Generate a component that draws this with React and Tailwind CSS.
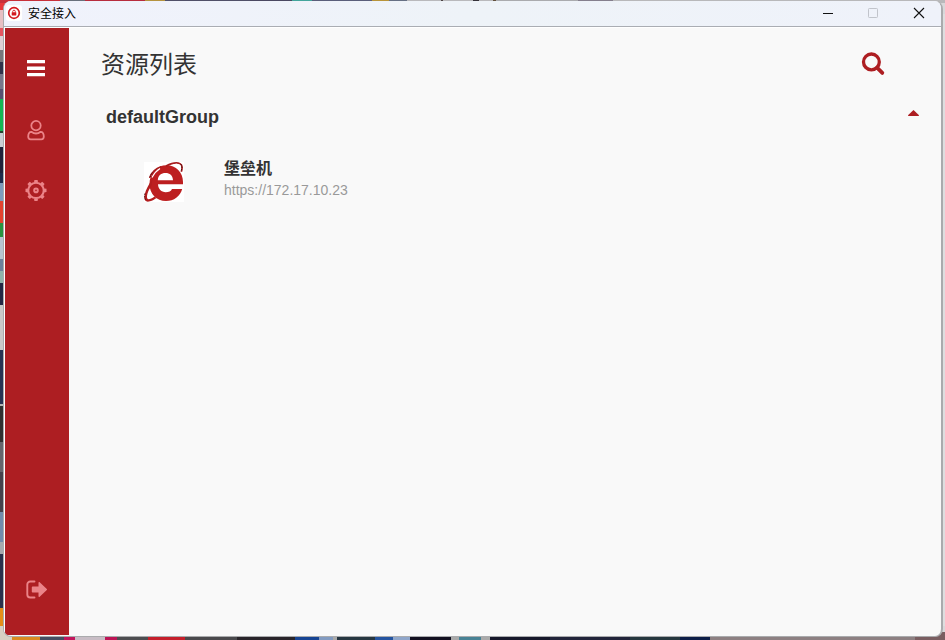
const leftEdge = [
  [10, '#e8383b'], [18, '#e7bfc3'], [8, '#e45660'], [14, '#dccfd4'], [12, '#77777c'],
  [12, '#30334a'], [15, '#77778a'], [10, '#565270'], [32, '#13b653'], [2, '#24452f'],
  [14, '#c9ced3'], [26, '#20223a'], [10, '#1e2c4c'], [18, '#7d9bbc'], [22, '#e4432f'],
  [14, '#29933f'], [22, '#b7c4d0'], [12, '#6d819c'], [12, '#8fb3aa'], [22, '#242844'],
  [45, '#c9c9c9'], [54, '#273353'], [2, '#b5b5b5'], [36, '#303030'], [30, '#65656c'],
  [40, '#45424c'], [30, '#718bac'], [12, '#a5a8ad'], [54, '#2b314c'], [18, '#e58d19'], [14, '#d8cfc2'],
];

const topEdge = [
  [60, '#c8303a'], [25, '#69707c'], [60, '#b72c3d'], [20, '#b5933f'], [85, '#505068'],
  [42, '#4a4861'], [20, '#43a59c'], [60, '#5a5e7a'], [17, '#b8943a'], [18, '#667084'],
  [34, '#b9b9bc'], [2, '#4d4545'], [30, '#b9b9bc'], [6, '#35323a'], [14, '#b9b9bc'],
  [3, '#62503c'], [82, '#aaabae'], [35, '#857f8d'], [332, '#b8b8ba'],
];

const bottomEdge = [
  [12, '#d7d0c2'], [28, '#d98a22'], [24, '#464e61'], [11, '#c2165c'], [30, '#c8bdc5'],
  [12, '#bd1555'], [31, '#4d4d50'], [37, '#c51f2b'], [52, '#4a494c'], [58, '#29252a'],
  [24, '#174493'], [14, '#829bc1'], [4, '#aaa'], [38, '#263641'], [18, '#2454a0'],
  [17, '#8fa6ca'], [41, '#121020'], [8, '#aaa'], [22, '#488295'], [9, '#aaa'],
  [60, '#17182a'], [80, '#22253a'], [50, '#26373f'], [30, '#0d1e48'], [205, '#8d8082'], [30, '#7a5e61'],
];

function Strip({ parts, vertical }) {
  return (
    <div className={vertical ? 'flex h-full w-full flex-col' : 'flex h-full w-full'}>
      {parts.map(([size, color], i) => (
        <span
          key={i}
          className="block shrink-0"
          style={{ background: color, [vertical ? 'height' : 'width']: size, [vertical ? 'width' : 'height']: '100%' }}
        />
      ))}
    </div>
  );
}

function ShieldLogo() {
  return (
    <svg className="h-4 w-4" viewBox="0 0 16 16">
      <rect width="16" height="16" rx="3" fill="#fff" />
      <circle cx="8" cy="8" r="5.300" fill="#fff" stroke="#d3181f" strokeWidth="1.700" />
      <rect x="5.700" y="7.200" width="4.600" height="3.200" rx=".4" fill="#d3181f" />
      <path d="M6.700 7.500V6.500a1.300 1.300 0 0 1 2.600 0v1" fill="none" stroke="#d3181f" strokeWidth=".9" />
    </svg>
  );
}

function MenuIcon() {
  return (
    <svg className="h-[17px] w-[18px]" viewBox="0 0 18 17" fill="#fff">
      <rect y="0" width="18" height="3.300" rx=".3" />
      <rect y="6.600" width="18" height="3.300" rx=".3" />
      <rect y="13" width="18" height="3.300" rx=".3" />
    </svg>
  );
}

function UserIcon() {
  return (
    <svg className="h-[21px] w-[18px]" viewBox="0 0 18 21" fill="none" stroke="#eb8388" strokeWidth="1.800">
      <circle cx="9" cy="5.600" r="4.700" />
      <path d="M4.800 12C2.400 11.600 1.200 13.600 1.200 16.600c0 1.900.9 2.800 2.500 2.800h10.600c1.600 0 2.500-.9 2.500-2.800 0-3-1.200-5-3.600-4.600C11 14 7 14 4.800 12Z" strokeLinejoin="round" />
    </svg>
  );
}

function GearIcon() {
  return (
    <svg className="h-[22px] w-[22px]" viewBox="-11 -11.4 22 22" fill="none" stroke="#eb8388">
      <circle r="7.700" strokeWidth="2" />
      <circle r="1.800" strokeWidth="2" />
      {[0, 45, 90, 135, 180, 225, 270, 315].map((a) => (
        <path key={a} d="M-2-8-1.600-10.500H1.600L2-8Z" fill="#eb8388" stroke="none" transform={`rotate(${a})`} />
      ))}
    </svg>
  );
}

function ExitIcon() {
  return (
    <svg className="h-[19px] w-[22px]" viewBox="0 0 22 19">
      <path d="M8.500 1.500H4.300A3 3 0 0 0 1.300 4.500v10a3 3 0 0 0 3 3h4.200" fill="none" stroke="#eb8388" strokeWidth="1.900" strokeLinecap="round" />
      <path d="M6.500 6.500h6V2.700c0-.8.600-1 1.200-.5l7.100 6.700c.4.400.4.800 0 1.200l-7.100 6.700c-.6.500-1.200.3-1.200-.5v-3.800h-6c-.4 0-.7-.3-.7-.7V7.200c0-.4.300-.7.700-.7Z" fill="#eb8388" />
    </svg>
  );
}

function BrowserIcon() {
  return (
    <svg className="block h-10 w-10" viewBox="0 0 40 40">
      <rect width="40" height="40" fill="#fff" />
      <path
        fill="#bd1f20"
        fillRule="evenodd"
        d="M22.500 3.300C32 3.300 39 10.500 39 20v2.300H14c.2 4.800 3.300 7.900 7.700 7.900 3.300 0 5.300-1 6.300-3.200H38.200C36 34.500 30 39 22 39 12.500 39 5.500 31.800 5.500 22.300 5.500 11.500 13 3.300 22.500 3.300ZM13.800 18.200H29c-.3-4.700-3.200-7.200-7.500-7.200s-7.400 2.500-7.700 7.200Z"
      />
      <path fill="#b31d1e" d="M8.500 17C4.500 22.500 2 27.500.8 32-.8 38.500 1.500 40.500 6 39.300 8.500 38.700 10.500 37.500 12.500 36L10.500 34.500C8 36.300 6 37.400 4.500 37.300 2.700 37 2.700 34.500 3.500 31.500 4.500 28.500 6 26 7.500 23.500Z" />
      <path d="M22 4C28 1 33.500.5 36 1.700c2.500 1.300 2.400 4.700 1.300 8" fill="none" stroke="#a81c1d" strokeWidth="1.700" />
      <path d="M5.600 16C7.500 10 11.500 6.500 17.500 4.500" fill="none" stroke="#a81c1d" strokeWidth="1.600" />
      <path d="M8 15.500C10 11.500 12.500 8.700 16 6.500" fill="none" stroke="#fff" strokeWidth="1.200" />
      <path d="M29 3.300C32.500 2.200 35.500 2.600 36 4.200c.3 1.200.1 2.500-.4 4" fill="none" stroke="#fff" strokeWidth="1.700" />
      <path d="M37 2.200 38 4.500l-.7 4.500M.8 31.500.6 35.500l1.200 2.800M6 15l2.500-5" fill="none" stroke="#351012" strokeWidth=".8" strokeDasharray="1.500 1" />
    </svg>
  );
}

function TitleBar() {
  return (
    <header className="flex h-[26px] shrink-0 items-center justify-between border-b border-[#aaadb3] bg-linear-to-r from-[#f0f2fc] via-[#eef3f8] to-[#eff2fa] pr-4 pb-px pl-[2px]">
      <div className="flex items-center gap-[6px] text-[12px] text-black">
        <ShieldLogo />
        <span className="pt-px leading-4">安全接入</span>
      </div>
      <div className="flex items-center">
        <svg className="h-3 w-[11px]" viewBox="0 0 11 12"><path d="M1 6.500H11" stroke="#111" /></svg>
        <svg className="ml-[34px] h-3 w-3" viewBox="0 0 12 12"><rect x="1.500" y="1.500" width="9" height="9" rx=".8" fill="none" stroke="#c1c4cb" /></svg>
        <svg className="ml-[34px] h-3 w-3" viewBox="0 0 12 12"><path d="M1 1 11 11M11 1 1 11" stroke="#111" strokeWidth="1.100" /></svg>
      </div>
    </header>
  );
}

function Sidebar() {
  return (
    <nav className="flex w-16 shrink-0 flex-col bg-[#ad1e22] pt-[32px] pb-[36px] pl-[21px]">
      <div className="pl-[1px]"><MenuIcon /></div>
      <div className="mt-[43px] pl-[1px]"><UserIcon /></div>
      <div className="mt-[38px] -ml-px"><GearIcon /></div>
      <div className="mt-auto"><ExitIcon /></div>
    </nav>
  );
}

function ResourceList() {
  return (
    <main className="min-w-0 flex-1 pt-[17px] pr-[22px] pl-8">
      <div className="flex h-[38px] items-center justify-between pr-[34px]">
        <h1 className="pt-px text-[24px] leading-[38px] font-normal text-[#333]">资源列表</h1>
        <svg className="h-6 w-6" viewBox="0 0 24 24" fill="none" stroke="#ad1e22">
          <circle cx="10.400" cy="9.900" r="7.900" strokeWidth="3.300" />
          <path d="M16 15.700 21.300 20.900" strokeWidth="3.800" strokeLinecap="round" />
        </svg>
      </div>
      <div className="mt-[20px] flex h-7 items-center justify-between pl-[5px]">
        <h2 className="text-[18px] leading-7 font-bold text-[#333]">defaultGroup</h2>
        <svg className="mb-2 h-[6px] w-[11px]" viewBox="0 0 11 6"><path d="M5.500 0 11 5.200Q11 6 10.500 6H.5Q0 6 0 5.200Z" fill="#ad1e22" /></svg>
      </div>
      <div className="mt-[31px] flex pl-[43px]">
        <BrowserIcon />
        <div className="-mt-1 ml-10">
          <p className="text-[16px] leading-[22px] font-bold text-[#333]">堡垒机</p>
          <p className="text-[14px] leading-[21px] text-[#999]">https://172.17.10.23</p>
        </div>
      </div>
    </main>
  );
}

export default function App() {
  return (
    <div className="relative h-[640px] w-[945px] overflow-hidden bg-[#d8d8da] pt-px pl-[3px] font-['Liberation_Sans','Noto_Sans_CJK_SC',sans-serif]">
      <div className="absolute top-0 left-0 h-full w-[12px]"><Strip parts={leftEdge} vertical /></div>
      <div className="absolute top-0 left-0 h-[3px] w-full"><Strip parts={topEdge} /></div>
      <div className="absolute bottom-0 left-0 h-[8px] w-full"><Strip parts={bottomEdge} /></div>
      <div className="absolute right-0 bottom-[14px] h-[612px] w-[5px] bg-[#dededf]" />
      <div className="relative flex h-[636px] w-[940px] flex-col overflow-hidden rounded-[8px] border-r-2 border-b border-l border-[#aaabad] bg-[#f9f9f9]">
        <TitleBar />
        <div className="flex min-h-0 flex-1 border-t border-l border-white pb-px">
          <Sidebar />
          <ResourceList />
        </div>
      </div>
    </div>
  );
}
